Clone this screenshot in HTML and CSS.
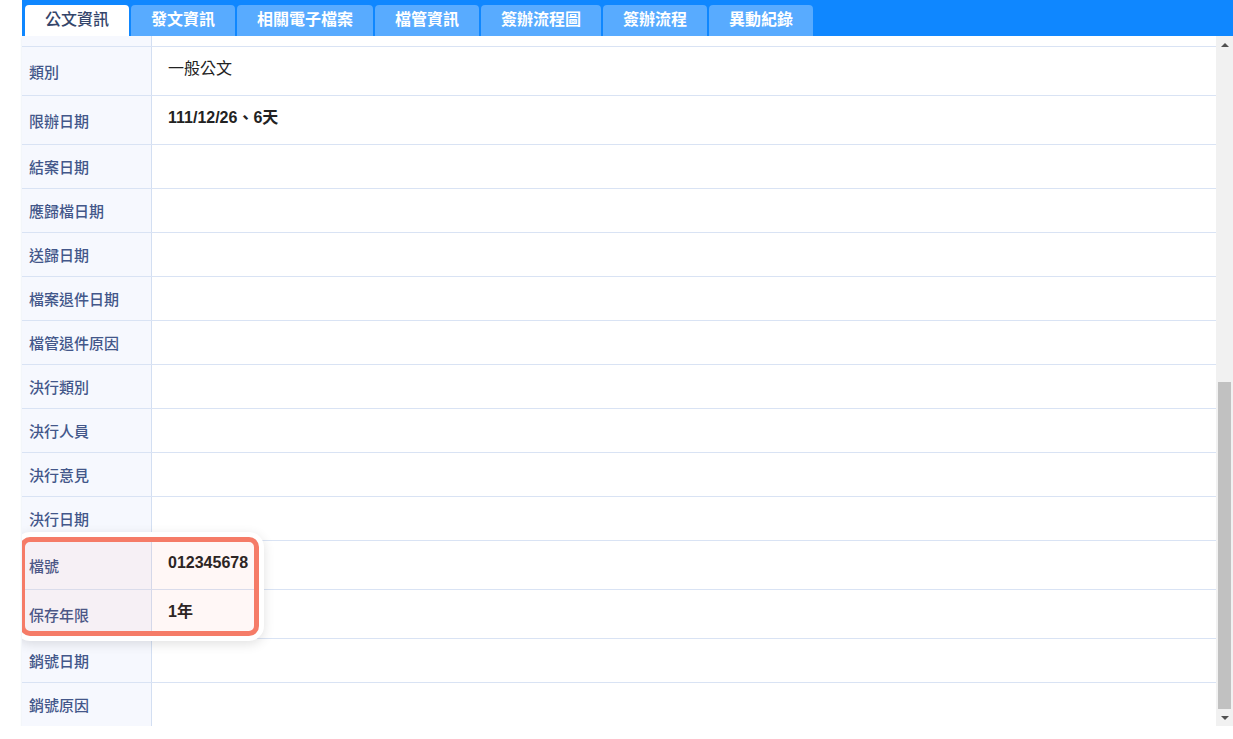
FILE: index.html
```html
<!DOCTYPE html>
<html lang="zh-Hant">
<head>
  <meta charset="UTF-8" />
  <title>公文資訊</title>
  <link rel="stylesheet" href="styles.css">
</head>
<body>
  <div class="page">
    <div class="tabs">
      <div class="tab active">公文資訊</div>
      <div class="tab">發文資訊</div>
      <div class="tab">相關電子檔案</div>
      <div class="tab">檔管資訊</div>
      <div class="tab">簽辦流程圖</div>
      <div class="tab">簽辦流程</div>
      <div class="tab">異動紀錄</div>
    </div>

    <div class="panel">
      <div class="info-table">
        <div class="row cut"><div class="label"></div><div class="value"></div></div>
        <div class="row"><div class="label">類別</div><div class="value">一般公文</div></div>
        <div class="row"><div class="label">限辦日期</div><div class="value bold">111/12/26、6天</div></div>
        <div class="row"><div class="label">結案日期</div><div class="value"></div></div>
        <div class="row"><div class="label">應歸檔日期</div><div class="value"></div></div>
        <div class="row"><div class="label">送歸日期</div><div class="value"></div></div>
        <div class="row"><div class="label">檔案退件日期</div><div class="value"></div></div>
        <div class="row"><div class="label">檔管退件原因</div><div class="value"></div></div>
        <div class="row"><div class="label">決行類別</div><div class="value"></div></div>
        <div class="row"><div class="label">決行人員</div><div class="value"></div></div>
        <div class="row"><div class="label">決行意見</div><div class="value"></div></div>
        <div class="row"><div class="label">決行日期</div><div class="value"></div></div>
        <div class="marked">
          <div class="row"><div class="label">檔號</div><div class="value bold">012345678</div></div>
          <div class="row"><div class="label">保存年限</div><div class="value bold">1年</div></div>
        </div>
        <div class="row"><div class="label">銷號日期</div><div class="value"></div></div>
        <div class="row"><div class="label">銷號原因</div><div class="value"></div></div>
      </div>

      <div class="scrollbar">
        <div class="sb-btn"><span class="arrow up"></span></div>
        <div class="sb-track"><div class="sb-thumb"></div></div>
        <div class="sb-btn"><span class="arrow down"></span></div>
      </div>
    </div>
  </div>
</body>
</html>
```

FILE: styles.css
```css
body {
  margin: 0;
  padding: 0;
  background: #fff;
  font-family: 'Liberation Sans', 'Noto Sans CJK TC', sans-serif;
  overflow: hidden;
}

.page {
  padding-left: 22px;
}

/* tabs */
.tabs {
  display: flex;
  gap: 2px;
  height: 36px;
  padding: 5px 0 0 3px;
  box-sizing: border-box;
  background: #0f87ff;
}

.tab {
  padding: 0 20px;
  height: 31px;
  line-height: 30px;
  font-size: 16px;
  font-weight: bold;
  color: #fff;
  background: #58abff;
  border-radius: 4px 4px 0 0;
}

.tab.active {
  background: #fff;
  color: #34456a;
  font-weight: 500;
}

/* table + scrollbar */
.panel {
  display: flex;
  height: 690px;
  overflow: hidden;
  box-shadow: 0 2px 2px rgba(150, 170, 210, 0.35);
}

.info-table {
  flex: 1;
}

.row {
  display: grid;
  grid-template-columns: 130px 1fr;
  border-bottom: 1px solid #d9e3f4;
  min-height: 43px;
}

.row.cut {
  min-height: 10px;
  height: 10px;
}

.label {
  display: flex;
  align-items: center;
  padding: 0 7px;
  background: #f6f8fe;
  border-right: 1px solid #d3dff2;
  font-size: 15px;
  font-weight: 500;
  color: #43578a;
}

.value {
  padding: 11px 16px 15px;
  line-height: 22px;
  font-size: 16px;
  color: #222;
}

.value:empty {
  padding: 0;
}

.value.bold {
  font-weight: bold;
}

/* highlight round the 檔號 rows */
.marked {
  position: relative;
}

.marked::after {
  content: '';
  position: absolute;
  left: -2px;
  top: -4px;
  width: 239px;
  height: 99px;
  box-sizing: border-box;
  border: 5px solid #f57b67;
  border-radius: 10px;
  background: rgba(255, 90, 70, 0.05);
  box-shadow: 0 0 0 5px #fff, 0 3px 12px 5px rgba(0, 0, 0, 0.12);
}

.scrollbar {
  width: 17px;
  display: flex;
  flex-direction: column;
  background: #f1f1f1;
}

.sb-btn {
  height: 17px;
  display: flex;
  align-items: center;
  justify-content: center;
}

.arrow {
  width: 0;
  height: 0;
  border-left: 4px solid transparent;
  border-right: 4px solid transparent;
}

.arrow.up {
  border-bottom: 4px solid #505050;
}

.arrow.down {
  border-top: 4px solid #505050;
}

.sb-track {
  flex: 1;
  display: flex;
  flex-direction: column;
  justify-content: flex-end;
  padding: 0 2px;
}

.sb-thumb {
  height: 327px;
  background: #c1c1c1;
}
```
